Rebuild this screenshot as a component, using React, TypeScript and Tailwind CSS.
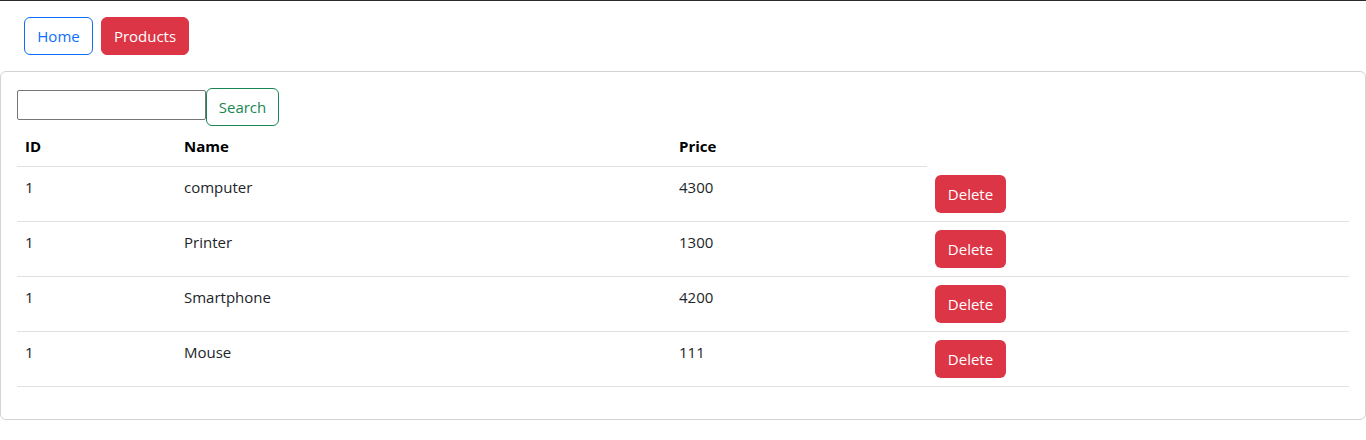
import React from "react";

const products = [
  { id: 1, name: "computer", price: 4300 },
  { id: 1, name: "Printer", price: 1300 },
  { id: 1, name: "Smartphone", price: 4200 },
  { id: 1, name: "Mouse", price: 111 },
];

const App: React.FC = () => {
  return (
    <div
      className="min-h-[440px] bg-white border-t border-[#2b2b2b] text-[#212529] text-base leading-6"
      style={{ fontFamily: '"Open Sans", "Noto Sans", sans-serif' }}
    >
      {/* Nav */}
      <div className="flex gap-2 pl-6 pt-4 pb-4">
        <button className="h-[38px] w-[69px] rounded-md border border-[#0d6efd] text-[#0d6efd] text-[15px]">
          Home
        </button>
        <button className="h-[38px] w-[88px] rounded-md border border-[#dc3545] bg-[#dc3545] text-white text-[15px]">
          Products
        </button>
      </div>

      {/* Card */}
      <div className="border border-[#d3d3d3] rounded-md p-4 h-[349px]">
        <div className="flex items-end h-[38px]">
          <input
            type="text"
            className="w-[189px] h-[30px] mb-[6px] border border-[#767676] rounded-[2px] px-0.5"
          />
          <button className="h-[38px] w-[73px] rounded-md border border-[#198754] text-[#198754] text-[15px]">
            Search
          </button>
        </div>

        <table className="w-full border-collapse text-left text-[15px]">
          <thead>
            <tr>
              <th className="w-[159px] px-2 py-2 font-bold border-b border-[#dee2e6] text-black">ID</th>
              <th className="w-[495px] px-2 py-2 font-bold border-b border-[#dee2e6] text-black">Name</th>
              <th className="w-[256px] px-2 py-2 font-bold border-b border-[#dee2e6] text-black">Price</th>
            </tr>
          </thead>
          <tbody>
            {products.map((p, i) => (
              <tr key={i} className="border-b border-[#dee2e6] align-top">
                <td className="px-2 py-2">{p.id}</td>
                <td className="px-2 py-2">{p.name}</td>
                <td className="px-2 py-2">{p.price}</td>
                <td className="px-2 py-2">
                  <button className="h-[38px] w-[71px] rounded-md bg-[#dc3545] text-white text-[15px]">
                    Delete
                  </button>
                </td>
              </tr>
            ))}
          </tbody>
        </table>
      </div>
    </div>
  );
};

export default App;
